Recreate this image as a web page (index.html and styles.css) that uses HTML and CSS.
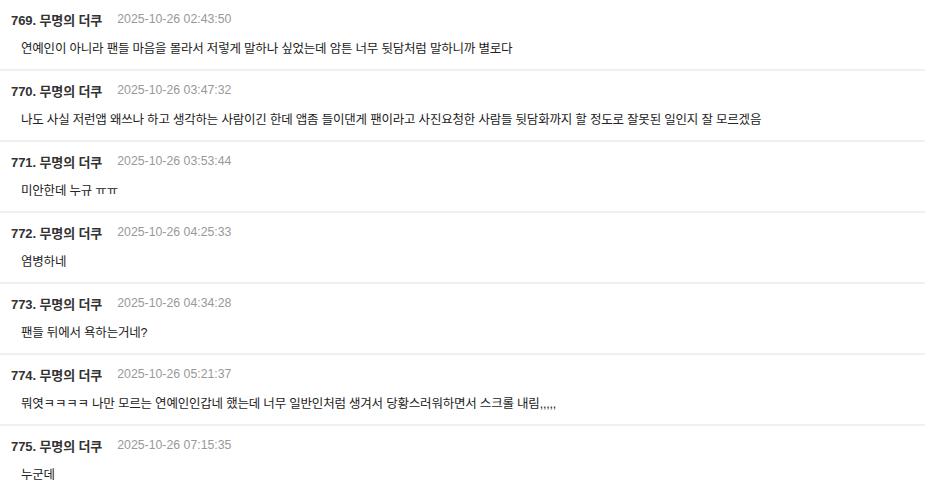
FILE: index.html
```html
<!DOCTYPE html>
<html lang="ko">
<head>
<meta charset="utf-8">
<link rel="stylesheet" href="styles.css">
</head>
<body>
<div class="list">
  <div class="item">
    <div class="head"><span class="name">769. 무명의 더쿠</span><span class="date">2025-10-26 02:43:50</span></div>
    <div class="body">연예인이 아니라 팬들 마음을 몰라서 저렇게 말하나 싶었는데 암튼 너무 뒷담처럼 말하니까 별로다</div>
  </div>
  <div class="item">
    <div class="head"><span class="name">770. 무명의 더쿠</span><span class="date">2025-10-26 03:47:32</span></div>
    <div class="body">나도 사실 저런앱 왜쓰나 하고 생각하는 사람이긴 한데 앱좀 들이댄게 팬이라고 사진요청한 사람들 뒷담화까지 할 정도로 잘못된 일인지 잘 모르겠음</div>
  </div>
  <div class="item">
    <div class="head"><span class="name">771. 무명의 더쿠</span><span class="date">2025-10-26 03:53:44</span></div>
    <div class="body">미안한데 누규 ㅠㅠ</div>
  </div>
  <div class="item">
    <div class="head"><span class="name">772. 무명의 더쿠</span><span class="date">2025-10-26 04:25:33</span></div>
    <div class="body">염병하네</div>
  </div>
  <div class="item">
    <div class="head"><span class="name">773. 무명의 더쿠</span><span class="date">2025-10-26 04:34:28</span></div>
    <div class="body">팬들 뒤에서 욕하는거네?</div>
  </div>
  <div class="item">
    <div class="head"><span class="name">774. 무명의 더쿠</span><span class="date">2025-10-26 05:21:37</span></div>
    <div class="body">뭐엿ㅋㅋㅋㅋ 나만 모르는 연예인인갑네 했는데 너무 일반인처럼 생겨서 당황스러워하면서 스크롤 내림,,,,,</div>
  </div>
  <div class="item">
    <div class="head"><span class="name">775. 무명의 더쿠</span><span class="date">2025-10-26 07:15:35</span></div>
    <div class="body">누군데</div>
  </div>
</div>
</body>
</html>
```
FILE: styles.css
```css
html, body {
  margin: 0;
  padding: 0;
  background: #fff;
}
body {
  font-family: "Liberation Sans", "Noto Sans CJK KR", sans-serif;
  color: #222;
}
.list {
  display: flex;
  flex-direction: column;
}
.item {
  padding: 9px 11px 10px;
  border-bottom: 2px solid #f0f0f0;
}
.head {
  display: flex;
  align-items: center;
  height: 20px;
}
.name {
  font-size: 13px;
  font-weight: bold;
  color: #333;
  letter-spacing: -0.1px;
}
.date {
  margin-left: 15px;
  font-size: 12.3px;
  color: #999;
}
.body {
  margin-top: 10px;
  padding-left: 10px;
  font-size: 12.5px;
  letter-spacing: -0.2px;
  line-height: 20px;
  color: #222;
}
```
